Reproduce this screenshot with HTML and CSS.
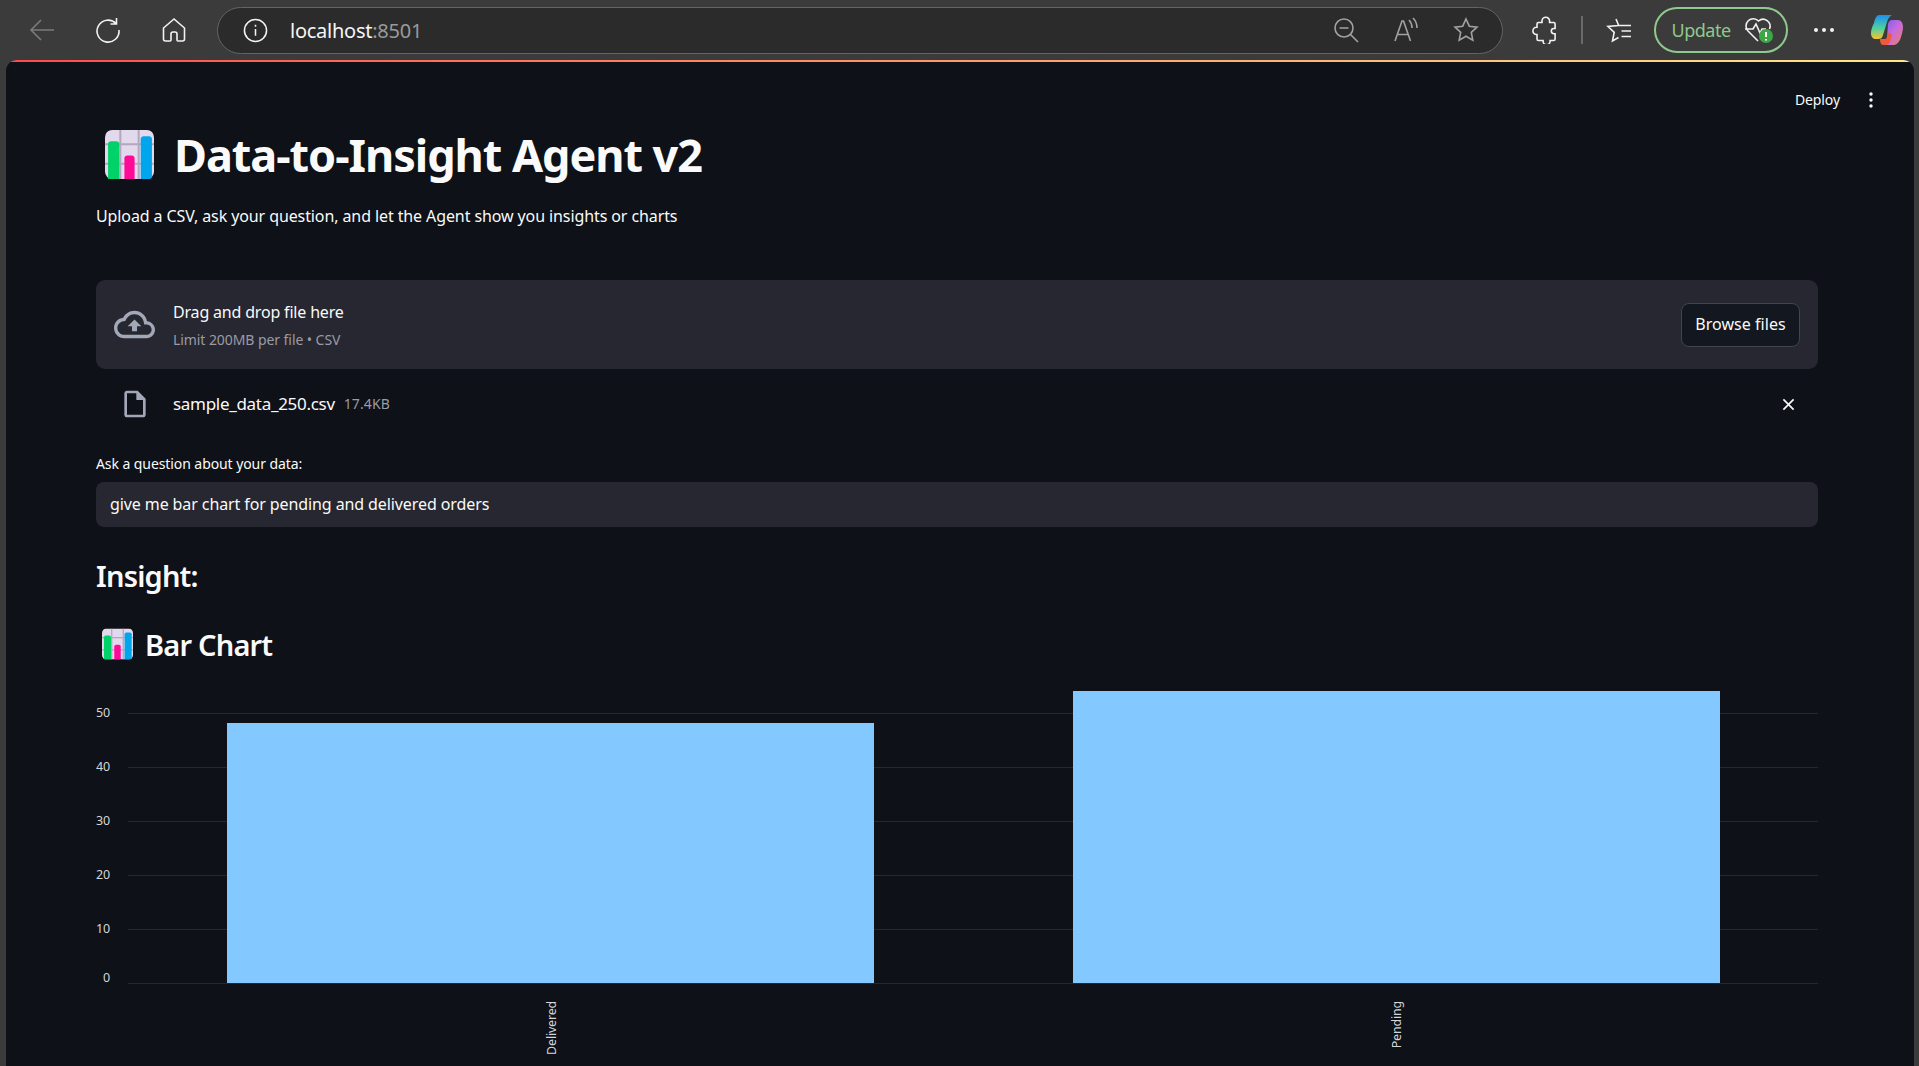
FILE: index.html
```html
<!DOCTYPE html>
<html lang="en">
<head>
<meta charset="utf-8">
<title>Data-to-Insight Agent v2</title>
<link rel="stylesheet" href="styles.css">
</head>
<body>
<header class="toolbar">
  <svg class="tb-icon back" viewBox="0 0 28 28"><path d="M26 14H3M13 4 3 14l10 10"/></svg>
  <svg class="tb-icon reload" viewBox="0 0 28 28"><path d="M22 7.5A11 11 0 1 0 25 14M22.500 2v6h-6"/></svg>
  <svg class="tb-icon home" viewBox="0 0 28 28"><path d="M14 3 3.500 12v11a2 2 0 0 0 2 2H10a1 1 0 0 0 1-1v-6a2 2 0 0 1 2-2h2a2 2 0 0 1 2 2v6a1 1 0 0 0 1 1h4.500a2 2 0 0 0 2-2V12z"/></svg>
  <div class="address">
    <svg class="info" viewBox="0 0 26 26"><circle cx="13" cy="13" r="11.500"/><path d="M13 11.500v7M13 7v2"/></svg>
    <span class="url">localhost<span class="port">:8501</span></span>
    <div class="addr-actions">
      <svg class="tb-icon dim" viewBox="0 0 28 28"><circle cx="12" cy="12" r="9"/><path d="M7.500 12h9M18.500 18.500 26 26"/></svg>
      <svg class="tb-icon dim" viewBox="0 0 28 28"><path d="M3 25 10 5h1.500l7 20M5.500 18.500H16M17 4c2 2 3 5 3 8M21 2c2.500 2.500 4 6 4 10"/></svg>
      <svg class="tb-icon dim" viewBox="0 0 28 28"><path d="m14 3 3.300 7.200 7.700.9-5.700 5.300 1.500 7.700-6.800-3.900-6.800 3.900 1.500-7.700L3 11.100l7.700-.9z"/></svg>
    </div>
  </div>
  <svg class="tb-icon puzzle" viewBox="0 0 28 28"><path d="M10 6.500V5a3.800 3.800 0 0 1 7.600 0v1.500h4a1.500 1.500 0 0 1 1.500 1.500v4.500h-1.200a2.600 2.600 0 0 0 0 5.200h1.200V23a1.500 1.500 0 0 1-1.500 1.500h-3.500v.8a3.500 3.500 0 0 1-7 0v-.8H6.500A1.500 1.500 0 0 1 5 23v-4.500H4.500a3.600 3.600 0 0 1 0-7.200H5V8a1.500 1.500 0 0 1 1.500-1.500z"/></svg>
  <span class="sep"></span>
  <svg class="tb-icon fav" viewBox="0 0 28 28"><path d="M11 3l2.700 6.500H26M16.500 15H26M16.500 20.500H26M13.700 9.500 3 10.500l6.200 5.800L7.500 25l6-3.500"/></svg>
  <div class="update">
    <span class="update-label">Update</span>
    <svg class="heart" viewBox="0 0 30 30"><path class="heart-line" d="M14 26 4 16a7 7 0 0 1 10.500-10 7 7 0 0 1 11 8M1 14h8l3-5 4 9 2-4h4"/><circle class="heart-badge" cx="22" cy="21" r="7"/><path class="heart-mark" d="M22 17v5M22 24v1.500"/></svg>
  </div>
  <div class="more"><i></i><i></i><i></i></div>
  <svg class="copilot" viewBox="0 0 34 34">
    <defs>
      <linearGradient id="cpA" x1="0" y1="0" x2="0" y2="1"><stop offset="0" stop-color="#1b8ff0"/><stop offset=".55" stop-color="#4fd0a0"/><stop offset="1" stop-color="#f9c32c"/></linearGradient>
      <linearGradient id="cpB" x1="0" y1="0" x2="1" y2="1"><stop offset="0" stop-color="#6a5cf0"/><stop offset=".5" stop-color="#c76ae0"/><stop offset="1" stop-color="#f08060"/></linearGradient>
    </defs>
    <path fill="url(#cpA)" d="M9 2h13c-2 1-4 3-5 7l-4 13c-1 3-2 4-5 4H6c-3 0-5-2-5-6 0-3 1-6 3-10 1-5 3-8 5-8z"/>
    <path fill="url(#cpB)" d="M18 11c1-3 2-4 4-4h6c3 0 5 3 5 7 0 3-1 7-2 10-1 4-4 8-7 8H12c3-1 4-3 5-7z"/>
    <path fill="#ef5a3c" d="M10 26h6l3-7 3 3c-1 5-3 10-6 10h-3c-2 0-3-3-3-6z"/>
  </svg>
</header>

<main class="app">
  <div class="app-header">
    <span class="deploy">Deploy</span>
    <svg class="kebab" viewBox="0 0 4 16"><circle cx="2" cy="2" r="1.700"/><circle cx="2" cy="8" r="1.700"/><circle cx="2" cy="14" r="1.700"/></svg>
  </div>

  <h1 class="title">
    <svg class="emoji emoji-lg" viewBox="0 0 48 48"><use href="#chart-emoji"/></svg>
    <span>Data-to-Insight Agent v2</span>
  </h1>
  <p class="subtitle">Upload a CSV, ask your question, and let the Agent show you insights or charts</p>

  <section class="uploader">
    <svg class="cloud" viewBox="0 0 24 24"><path d="M19.350 10.040C18.670 6.590 15.640 4 12 4 9.110 4 6.600 5.640 5.350 8.040 2.340 8.360 0 10.910 0 14c0 3.310 2.690 6 6 6h13c2.760 0 5-2.240 5-5 0-2.640-2.050-4.780-4.650-4.960zM19 18H6c-2.210 0-4-1.790-4-4 0-2.050 1.530-3.760 3.560-3.970l1.070-.11.5-.95C8.080 7.140 9.940 6 12 6c2.620 0 4.880 1.860 5.390 4.430l.3 1.500 1.530.11c1.560.1 2.780 1.410 2.780 2.960 0 1.650-1.350 3-3 3zM8 13h2.550v3h2.900v-3H16l-4-4z"/></svg>
    <div class="drop-text">
      <div class="drop-title">Drag and drop file here</div>
      <div class="drop-limit">Limit 200MB per file • CSV</div>
    </div>
    <button class="browse">Browse files</button>
  </section>

  <div class="file-row">
    <svg class="file-icon" viewBox="0 0 24 24"><path d="M14 2H6c-1.100 0-1.990.9-1.990 2L4 20c0 1.100.89 2 1.990 2H18c1.100 0 2-.9 2-2V8l-6-6zM6 20V4h7v5h5v11H6z"/></svg>
    <span class="file-name">sample_data_250.csv</span>
    <span class="file-size">17.4KB</span>
    <svg class="close" viewBox="0 0 14 14"><path d="M1.500 1.500l11 11M12.500 1.500l-11 11"/></svg>
  </div>

  <label class="q-label">Ask a question about your data:</label>
  <div class="q-input">give me bar chart for pending and delivered orders</div>

  <h2 class="insight">Insight:</h2>
  <h3 class="chart-title">
    <svg class="emoji emoji-sm" viewBox="0 0 48 48"><use href="#chart-emoji"/></svg>
    <span>Bar Chart</span>
  </h3>

  <svg class="chart" viewBox="0 0 1722 376" width="1722" height="376">
    <g class="grid">
      <path d="M32 23.500H1722M32 77.500H1722M32 131.500H1722M32 185.500H1722M32 239.500H1722M32 293.500H1722"/>
    </g>
    <rect class="bar" x="131" y="33" width="647" height="260"/>
    <rect class="bar" x="977" y="1" width="647" height="292"/>
    <g class="y-ticks">
      <text x="14" y="27">50</text>
      <text x="14" y="81">40</text>
      <text x="14" y="135">30</text>
      <text x="14" y="189">20</text>
      <text x="14" y="243">10</text>
      <text x="14" y="292">0</text>
    </g>
    <text class="x-tick" transform="translate(460 311) rotate(-90)">Delivered</text>
    <text class="x-tick" transform="translate(1305 311) rotate(-90)">Pending</text>
  </svg>

  <svg class="defs-only" aria-hidden="true">
    <symbol id="chart-emoji" viewBox="0 0 48 48">
      <rect width="48" height="48" rx="7" fill="#e2d9ec"/>
      <path d="M15 0v48M33 0v48M0 14h48M0 33h48" stroke="#b3a8bf" stroke-width="2"/>
      <path d="M3 48V14a3 3 0 0 1 3-3h5a3 3 0 0 1 3 3v34z" fill="#00d26a"/>
      <path d="M19 48V28a3 3 0 0 1 3-3h4a3 3 0 0 1 3 3v20z" fill="#ff0a98"/>
      <path d="M35 48V9a3 3 0 0 1 3-3h5a3 3 0 0 1 3 3v36a3 3 0 0 1-3 3z" fill="#00a6ed"/>
    </symbol>
  </svg>
</main>
</body>
</html>
```
FILE: styles.css
```css
* { box-sizing: border-box; }
html, body { margin: 0; height: 100%; overflow: hidden; }
body {
  width: 1919px;
  height: 1066px;
  background: #3b3b3b;
  font-family: "Noto Sans", "Open Sans", sans-serif;
  color: #fafafa;
  display: flex;
  flex-direction: column;
}

/* browser toolbar */
.toolbar {
  height: 60px;
  flex: none;
  display: flex;
  align-items: center;
  padding-left: 28px;
  position: relative;
}
.tb-icon {
  width: 28px;
  height: 28px;
  fill: none;
  stroke: #f2f2f2;
  stroke-width: 1.6;
  flex: none;
}
.back { stroke: #7b7b7b; }
.reload { margin-left: 38px; }
.home { margin-left: 38px; }
.dim { stroke: #a2a2a2; }
.address {
  margin-left: 29px;
  width: 1286px;
  height: 47px;
  flex: none;
  border: 1.500px solid #646464;
  border-radius: 24px;
  background: #2b2b2b;
  display: flex;
  align-items: center;
  padding-left: 25px;
}
.info {
  width: 25px;
  height: 25px;
  fill: none;
  stroke: #f2f2f2;
  stroke-width: 1.6;
}
.url {
  margin-left: 22px;
  font-size: 20px;
  letter-spacing: -0.25px;
  color: #f5f5f5;
}
.port { color: #9a9a9a; }
.addr-actions {
  margin-left: auto;
  display: flex;
  gap: 32px;
  padding-right: 22px;
}
.puzzle { margin-left: 29px; }
.sep {
  width: 1.500px;
  height: 28px;
  background: #6a6a6a;
  margin-left: 21px;
  flex: none;
}
.fav { margin-left: 22px; }
.update {
  margin-left: 21px;
  width: 134px;
  height: 46px;
  border: 2px solid #8fc98d;
  border-radius: 23px;
  display: flex;
  align-items: center;
  padding-left: 16px;
  flex: none;
}
.update-label {
  font-size: 18px;
  letter-spacing: -0.5px;
  color: #8fc98d;
}
.heart {
  width: 30px;
  height: 30px;
  margin-left: 13px;
  flex: none;
}
.heart-line { fill: none; stroke: #f2f2f2; stroke-width: 1.6; }
.heart-badge { fill: #3fa648; }
.heart-mark { fill: none; stroke: #fff; stroke-width: 2; }
.more {
  margin-left: 26px;
  display: flex;
  gap: 4px;
  flex: none;
}
.more i {
  width: 4px;
  height: 4px;
  border-radius: 50%;
  background: #f2f2f2;
}
.copilot {
  width: 34px;
  height: 34px;
  margin-left: 36px;
  flex: none;
}

/* streamlit frame */
.app {
  flex: 1;
  min-height: 0;
  margin: 0 5px 0 6px;
  padding: 70px 96px 0 90px;
  background: #0e1117;
  border-top-left-radius: 11px;
  border-top-right-radius: 11px;
  overflow: hidden;
  position: relative;
}
.app::before {
  content: "";
  position: absolute;
  left: 0;
  right: 0;
  top: 0;
  height: 2px;
  background: linear-gradient(90deg, #ff4b4b, #ffe78a);
}
.app-header {
  position: absolute;
  top: 29px;
  right: 41px;
  height: 20px;
  display: flex;
  align-items: center;
  gap: 29px;
}
.deploy { font-size: 14px; letter-spacing: -0.1px; }
.kebab { width: 4px; height: 16px; fill: #fafafa; margin-top: 2px; }

.title {
  margin: 0;
  height: 50px;
  display: flex;
  align-items: center;
  gap: 20px;
  padding-left: 9px;
  font-size: 45px;
  font-weight: 700;
  letter-spacing: -1.04px;
  line-height: 50px;
}
.emoji { display: block; flex: none; }
.emoji-lg { width: 49px; height: 49px; margin-bottom: 2px; }
.emoji-sm { width: 31px; height: 32px; }
.subtitle {
  margin: 24px 0 0;
  height: 24px;
  line-height: 24px;
  font-size: 16px;
  letter-spacing: -0.1px;
}

.uploader {
  margin-top: 52px;
  height: 89px;
  background: #262730;
  border-radius: 9px;
  display: flex;
  align-items: center;
  padding: 0 18px 0 18px;
}
.cloud { width: 41px; height: 41px; fill: #a3a8b8; flex: none; }
.drop-text { margin-left: 18px; }
.drop-title {
  font-size: 16px;
  line-height: 24px;
  letter-spacing: -0.18px;
}
.drop-limit {
  margin-top: 6px;
  font-size: 14px;
  line-height: 20px;
  letter-spacing: -0.07px;
  color: #9a9ba5;
}
.browse {
  margin-left: auto;
  width: 119px;
  height: 44px;
  background: #13171f;
  border: 1px solid #41434d;
  border-radius: 8px;
  color: #fafafa;
  font: inherit;
  font-size: 16px;
  letter-spacing: 0.05px;
  padding: 0 0 2px;
}

.file-row {
  margin-top: 15px;
  height: 40px;
  display: flex;
  align-items: center;
  padding-left: 23px;
}
.file-icon { width: 32px; height: 32px; fill: #a3a8b8; flex: none; }
.file-name {
  margin-left: 22px;
  padding-bottom: 2px;
  font-size: 17px;
  letter-spacing: -0.3px;
}
.file-size {
  margin-left: 9px;
  padding-bottom: 2px;
  font-size: 14px;
  letter-spacing: 0.1px;
  color: #9a9ba5;
}
.close {
  margin-left: auto;
  margin-right: 23px;
  width: 13px;
  height: 13px;
  fill: none;
  stroke: #fafafa;
  stroke-width: 1.800;
  flex: none;
}

.q-label {
  display: block;
  margin-top: 30px;
  height: 20px;
  line-height: 20px;
  font-size: 14px;
  letter-spacing: -0.08px;
}
.q-input {
  margin-top: 8px;
  height: 45px;
  line-height: 45px;
  background: #262730;
  border-radius: 8px;
  padding-left: 14px;
  font-size: 16px;
  letter-spacing: -0.1px;
}

.insight {
  margin: 29px 0 0;
  height: 40px;
  line-height: 40px;
  font-size: 29px;
  font-weight: 600;
  letter-spacing: -0.8px;
}
.chart-title {
  margin: 28px 0 0;
  height: 40px;
  display: flex;
  align-items: center;
  gap: 12px;
  padding-left: 6px;
  font-size: 29px;
  font-weight: 600;
  letter-spacing: -0.8px;
}

.chart { display: block; margin-top: 26px; overflow: hidden; }
.grid path { fill: none; stroke: #262730; stroke-width: 1; }
.bar { fill: #83c9ff; }
.y-ticks text, .x-tick {
  font-family: "Noto Sans", "Open Sans", sans-serif;
  font-size: 12.500px;
  letter-spacing: -0.2px;
  fill: #d5d6da;
}
.y-ticks text { text-anchor: end; }
.x-tick { text-anchor: end; }
.defs-only { position: absolute; width: 0; height: 0; }
```
